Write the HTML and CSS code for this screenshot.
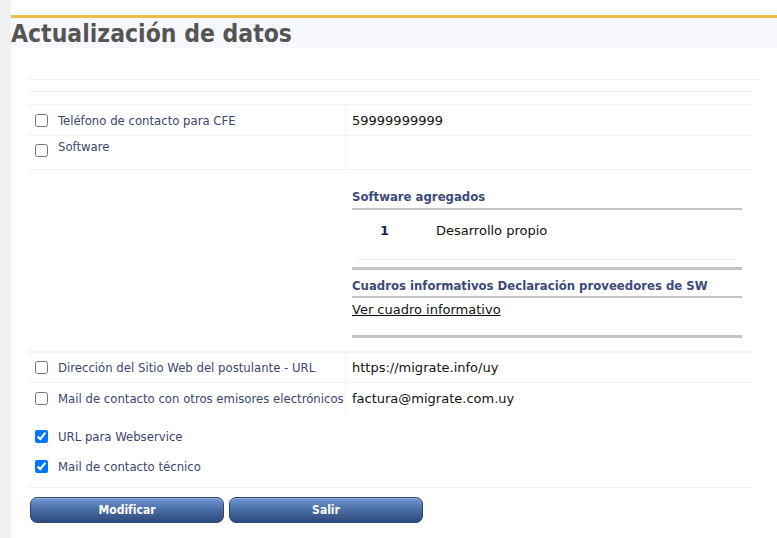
FILE: index.html
```html
<!DOCTYPE html>
<html lang="es">
<head>
<meta charset="utf-8">
<title>Actualización de datos</title>
<link rel="stylesheet" href="styles.css">
</head>
<body>
<div class="page">
  <div class="side"></div>
  <main class="content">
    <div class="topline"></div>
    <h1 class="title">Actualización de datos</h1>
    <div class="form">
      <div class="spacer s1"></div>
      <div class="spacer s2"></div>
      <div class="row r1">
        <label class="lab"><input type="checkbox"> <span>Teléfono de contacto para CFE</span></label>
        <div class="val">59999999999</div>
      </div>
      <div class="row r2">
        <label class="lab top"><input type="checkbox"> <span>Software</span></label>
        <div class="val"></div>
      </div>
      <div class="row r3">
        <div class="lab"></div>
        <div class="val">
          <div class="box">
            <div class="hd">Software agregados</div>
            <div class="line2"></div>
            <div class="item"><span class="num">1</span><span>Desarrollo propio</span></div>
            <div class="faint"></div>
            <div class="line3"></div>
            <div class="hd hd2">Cuadros informativos Declaración proveedores de SW</div>
            <div class="line2"></div>
            <a class="link" href="#">Ver cuadro informativo</a>
            <div class="line3 last"></div>
          </div>
        </div>
      </div>
      <div class="row r4">
        <label class="lab"><input type="checkbox"> <span>Dirección del Sitio Web del postulante - URL</span></label>
        <div class="val">https://migrate.info/uy</div>
      </div>
      <div class="row r5">
        <label class="lab"><input type="checkbox"> <span>Mail de contacto con otros emisores electrónicos</span></label>
        <div class="val">factura@migrate.com.uy</div>
      </div>
      <div class="row plain r6">
        <label class="lab"><input type="checkbox" checked> <span>URL para Webservice</span></label>
      </div>
      <div class="row plain r7">
        <label class="lab"><input type="checkbox" checked> <span>Mail de contacto técnico</span></label>
      </div>
      <div class="buttons">
        <button class="btn" type="button">Modificar</button>
        <button class="btn" type="button">Salir</button>
      </div>
    </div>
  </main>
</div>
</body>
</html>
```
FILE: styles.css
```css
html, body {
  margin: 0;
  padding: 0;
  background: #ffffff;
}
body {
  font-family: "DejaVu Sans Condensed", "DejaVu Sans", sans-serif;
  font-size: 13px;
  color: #3b4670;
}
.page {
  display: flex;
  min-height: 538px;
}
.side {
  width: 11px;
  flex: none;
  background: #f0f0f1;
}
.content {
  flex: 1;
  min-width: 0;
}
.topline {
  margin-top: 15px;
  height: 3px;
  background: #e8bf48;
}
.title {
  margin: 0;
  height: 30px;
  line-height: 31px;
  background: #f7f8fd;
  color: #555555;
  font-family: "DejaVu Sans Condensed", "DejaVu Sans", sans-serif;
  font-size: 24.5px;
  font-weight: bold;
  padding-left: 0;
}
.form {
  padding: 0 0 0 17px;
}
.spacer {
  border-bottom: 1px solid #f3f3f3;
}
.s1 { height: 31px; margin-right: 17px; }
.s2 { height: 11px; margin-right: 25px; }
.row {
  display: grid;
  grid-template-columns: 317px 1fr;
  margin-right: 25px;
  border-bottom: 1px solid #f2f2f2;
}
.r1 { margin-top: 12px; border-top: 1px solid #f4f4f4; }
.lab {
  display: flex;
  align-items: center;
  padding-left: 6px;
  gap: 0;
}
.lab input {
  margin: 0 10px 0 1px;
  width: 13px;
  height: 13px;
  flex: none;
}
.lab.top {
  align-items: flex-start;
  padding-top: 3px;
}
.lab.top input { margin-top: 5px; }
.val {
  border-left: 1px solid #f4f4f4;
  padding-left: 6px;
  display: flex;
  align-items: center;
  font-family: "DejaVu Sans", sans-serif;
  font-size: 13px;
  color: #111111;
}
.r1 { height: 30px; }
.r2 { height: 33px; }
.r3 { border-bottom: 1px solid #f2f2f2; }
.r3 .val { border-left: none; display: block; padding-left: 7px; }
.box {
  width: 390px;
  padding-top: 19px;
  padding-bottom: 13px;
}
.hd {
  font-family: "DejaVu Sans Condensed", "DejaVu Sans", sans-serif;
  font-weight: bold;
  font-size: 13px;
  color: #3c4a7b;
  line-height: 16px;
  padding-bottom: 3px;
}
.hd2 { padding-top: 8px; padding-bottom: 2px; }
.line2 { height: 2px; background: #c4c4c4; }
.line3 { height: 3px; background: #c4c4c4; }
.item {
  display: flex;
  align-items: center;
  height: 40px;
  font-family: "DejaVu Sans", sans-serif;
  font-size: 13px;
  color: #111111;
}
.num {
  font-weight: bold;
  width: 56px;
  padding-left: 28px;
  color: #1c2440;
}
.faint {
  height: 1px;
  background: #f2f2f2;
  margin: 9px 5px 7px 3px;
}
.link {
  display: block;
  color: #111111;
  font-family: "DejaVu Sans", sans-serif;
  font-size: 13px;
  padding-top: 4px;
  line-height: 16px;
  margin-bottom: 17px;
}
.r4 { height: 29px; border-top: 1px solid #f2f2f2; }
.r5 { height: 30px; border-bottom: none; }
.plain { border-bottom: none; }
.r6 { margin-top: 8px; height: 30px; grid-template-columns: 1fr; }
.r7 { height: 30px; grid-template-columns: 1fr; }
.buttons {
  border-top: 1px solid #f3f3f3;
  margin-top: 6px;
  margin-right: 25px;
  padding-top: 9px;
  display: flex;
  gap: 5px;
  padding-left: 2px;
}
.btn {
  width: 194px;
  height: 26px;
  border: 1px solid #2d4674;
  border-radius: 7px;
  background: linear-gradient(#7097d2 0%, #4d70a8 45%, #2e4a7c 100%);
  color: #ffffff;
  font-family: "DejaVu Sans Condensed", "DejaVu Sans", sans-serif;
  font-weight: bold;
  font-size: 12px;
  padding: 0;
  box-shadow: inset 0 1px 0 rgba(255,255,255,0.25);
  cursor: pointer;
}
```
